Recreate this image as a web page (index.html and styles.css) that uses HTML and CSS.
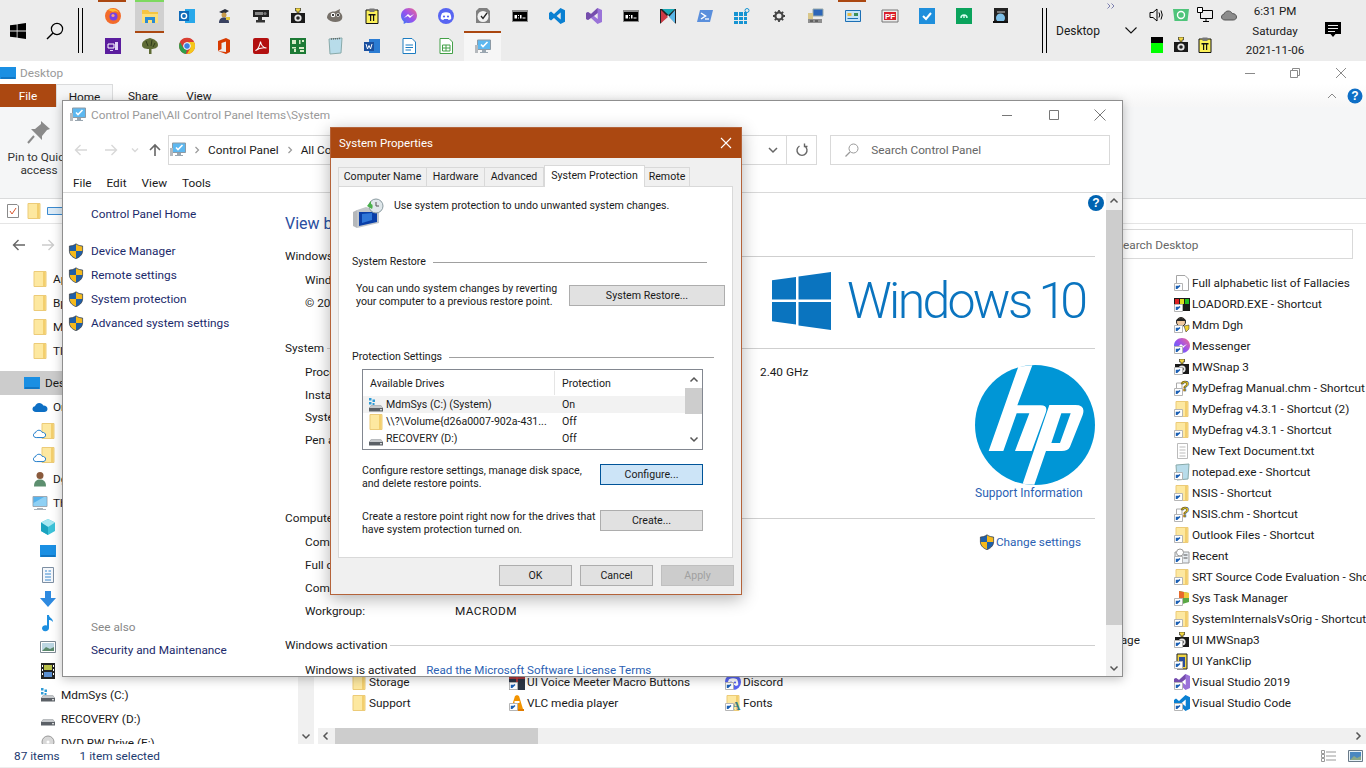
FILE: index.html
```html
<!DOCTYPE html>
<html lang="en">
<head>
<meta charset="utf-8">
<title>System Properties</title>
<link rel="stylesheet" href="styles.css">
</head>
<body>
<svg class="defs" aria-hidden="true">
  <symbol id="folder" viewBox="0 0 16 16"><path d="M2 0.5H14V15.5H2Z" fill="#fde8a0" stroke="#eccb78"/><path d="M11 1V15H13.5V1Z" fill="#f3cf6e"/></symbol>
  <symbol id="link" viewBox="0 0 16 16"><path d="M0.5 8.5H8.5V15.5H0.5Z" fill="#fff" stroke="#b5b5b5"/><path d="M2.5 14V11.5H5.2M2.8 13.6L6 10.4" fill="none" stroke="#1a5fb4" stroke-width="1.4"/></symbol>
  <symbol id="shield" viewBox="0 0 16 16"><path d="M8 .8C10 2.4 12.6 3 14.6 3V8C14.6 12 11 14.6 8 15.6 5 14.6 1.4 12 1.4 8V3C3.4 3 6 2.4 8 .8Z" fill="#1f5fa8" stroke="#3a3a3a" stroke-width=".7"/><path d="M8 1.3C10 2.8 12.3 3.3 14.2 3.4V8H8ZM8 8V15.2C5.2 14.2 1.8 11.8 1.8 8Z" fill="#f6b91a"/></symbol>
  <symbol id="cmd" viewBox="0 0 16 16"><path d="M0 2H16V14H0Z" fill="#8a8a8a"/><path d="M1 4H15V13H1Z" fill="#000"/><path d="M2.5 7H5V10.5H2.5ZM6 7H7V8H6ZM6 9.5H7V10.5H6ZM8 7H9.5V10.5H8ZM10.5 9.5H13.5V10.5H10.5Z" fill="#fff"/></symbol>
  <symbol id="drive" viewBox="0 0 16 16"><path d="M1 11L3 8.5H13L15 11V14.5H1Z" fill="#5b6066"/><path d="M3 8.5H13L15 11H1Z" fill="#c6c9cc"/><path d="M12 12.3H14V13.3H12Z" fill="#fff"/></symbol>
  <symbol id="sysdrive" viewBox="0 0 16 16"><use href="#drive"/><path d="M1 1H3.5V3.5H1ZM4.5 2.5H7V5H4.5ZM1 5H3.5V7.5H1ZM4.5 6H6.5V8H4.5Z" fill="#2f9bd6"/></symbol>
  <symbol id="camera" viewBox="0 0 16 16"><path d="M5.5 0H10.5V3H9V5H7V3H5.5Z" fill="#f0d545" stroke="#111" stroke-width=".6"/><path d="M1 5H15V15H1Z" fill="#1a1a1a"/><circle cx="8" cy="10" r="3.6" fill="#e6e6e6"/><circle cx="8" cy="10" r="1.8" fill="#222"/></symbol>
  <symbol id="clip" viewBox="0 0 16 16"><path d="M2 2H14V15.5H2Z" fill="#fcf15a" stroke="#111"/><path d="M5.5 .5H10.5V4H5.5Z" fill="#777"/><path d="M4.5 6H11.5V7.4H4.5ZM6 7.4H7.2V13H6ZM9 7.4H10.2V13H9Z" fill="#111"/></symbol>
  <symbol id="vsc" viewBox="0 0 16 16"><path d="M11.5 0L16 2.2V13.8L11.5 16 5 10 2 12.4 0 11V5L2 3.6 5 6ZM11.7 4.5L7.6 8 11.7 11.5Z" fill="#0a80d2"/></symbol>
  <symbol id="vs" viewBox="0 0 16 16"><path d="M11.5 0L16 2V14L11.5 16 5 10 2 12 0 11V5L2 4 5 6ZM11.7 5L8 8 11.7 11Z" fill="#9a73d8"/><path d="M0 5L2 4 5 6 11.5 0V5L2 12 0 11Z" fill="#68409e" opacity=".75"/></symbol>
  <symbol id="msgr" viewBox="0 0 16 16"><defs><linearGradient id="mg" x1="0" y1="1" x2="1" y2="0"><stop offset="0" stop-color="#2f7bf5"/><stop offset=".5" stop-color="#9a52ee"/><stop offset="1" stop-color="#f46a8c"/></linearGradient></defs><path d="M8 0C3.6 0 0 3.2 0 7.6 0 10 1 12 2.7 13.4V16L5.2 14.7C6 15 7 15.1 8 15.1 12.4 15.1 16 11.9 16 7.6 16 3.2 12.4 0 8 0Z" fill="url(#mg)"/><path d="M3 10L7 6 9.2 8 13 6 9 10 6.8 8Z" fill="#fff"/></symbol>
  <symbol id="discord" viewBox="0 0 16 16"><circle cx="8" cy="8" r="8" fill="#5865f2"/><path d="M4 5.2C6.5 4 9.5 4 12 5.2 13 7 13.4 9 13.2 11 12.2 11.7 11.3 12 10.5 12L10 11H6L5.5 12C4.7 12 3.8 11.7 2.8 11 2.6 9 3 7 4 5.2Z" fill="#fff"/><circle cx="6" cy="8.5" r="1.1" fill="#5865f2"/><circle cx="10" cy="8.5" r="1.1" fill="#5865f2"/></symbol>
  <symbol id="computer" viewBox="0 0 16 16"><path d="M1 1.5H15V11.5H1Z" fill="#56b2ec" stroke="#9fa9b3"/><path d="M5 13H11V14H14V15H2V14H5Z" fill="#a9b2ba"/><path d="M1.5 8L12 2H14.5V11H1.5Z" fill="#8fd0f4"/></symbol>
  <symbol id="desktop" viewBox="0 0 16 16"><path d="M0 2H16V14H0Z" fill="#1a8fe3"/><path d="M1 12.5H15V13.5H1Z" fill="#0a5da3"/></symbol>
  <symbol id="pcmon" viewBox="0 0 16 16"><path d="M2.5 1H15.5V10.5H2.5Z" fill="#5db8f0" stroke="#8d9aa5"/><path d="M6 5.5L8 7.5 12.5 3" fill="none" stroke="#fff" stroke-width="1.6"/><path d="M7 11H11V13H13V14H5V13H7Z" fill="#9aa6b0"/><path d="M0 6H3V14H0Z" fill="#b5b9bd"/></symbol>
  <symbol id="cloud" viewBox="0 0 16 16"><path d="M4 13C1.8 13 .5 11.6.5 10 .5 8.5 1.6 7.3 3 7.2 3.6 5.3 5.2 4 7.2 4 9 4 10.6 5 11.3 6.6 13.7 6.5 15.5 8 15.5 10 15.5 11.8 14 13 12.2 13Z" fill="#0d6fc4"/></symbol>
  <symbol id="cloudo" viewBox="0 0 16 16"><path d="M4 13C1.8 13 .5 11.6.5 10 .5 8.5 1.6 7.3 3 7.2 3.6 5.3 5.2 4 7.2 4 9 4 10.6 5 11.3 6.6 13.7 6.5 15.5 8 15.5 10 15.5 11.8 14 13 12.2 13Z" fill="#fff" stroke="#1a78c8" stroke-width="1.2"/></symbol>
</svg>

<header class="taskbar">
  <div class="tb-start"><svg class="i16" viewBox="0 0 16 16"><path d="M0 2.3L6.7 1.4V7.5H0ZM7.5 1.3L16 0V7.5H7.5ZM0 8.4H6.7V14.6L0 13.7ZM7.5 8.4H16V16L7.5 14.7Z" fill="#000"/></svg></div>
  <div class="tb-search"><svg class="i18" viewBox="0 0 18 18"><circle cx="11" cy="7" r="5.6" fill="none" stroke="#000" stroke-width="1.2"/><path d="M7 11L1 17" stroke="#000" stroke-width="1.4"/></svg></div>
  <div class="grip"></div>
  <div class="quick-launch">
    <div class="ql marked"><svg class="i16" viewBox="0 0 16 16"><circle cx="8" cy="8" r="8" fill="#f36b2a"/><path d="M3 2C6 0 12 0 14 5 12 3 9 3 8 4Z" fill="#ffb92e"/><circle cx="8.5" cy="8.5" r="4" fill="#7542e5"/><circle cx="8" cy="7.5" r="1.6" fill="#f7a07e"/></svg></div>
    <div class="ql active"><svg class="i16" viewBox="0 0 16 16"><path d="M0 1H6L7.5 3H16V14H0Z" fill="#f5c542"/><path d="M0 5H16V14H0Z" fill="#fcdf78"/><path d="M3 8H13V14H10V11H6V14H3Z" fill="#2a8ad4"/></svg></div>
    <div class="ql"><svg class="i16" viewBox="0 0 16 16"><path d="M6 1H16V15H6Z" fill="#28a8ea"/><path d="M0 3H10V13H0Z" fill="#0f6ab8"/><circle cx="5" cy="8" r="2.6" fill="none" stroke="#fff" stroke-width="1.4"/></svg></div>
    <div class="ql"><svg class="i16" viewBox="0 0 16 16"><path d="M3 4L9 1 13 3 8 6Z" fill="#2b2f3c"/><circle cx="8" cy="7" r="2.5" fill="#c79a4a"/><path d="M3 15C3 11 5 9.5 8 9.5S13 11 13 15Z" fill="#3a4260"/><path d="M10 9H14V12H10Z" fill="#e2c53a"/></svg></div>
    <div class="ql"><svg class="i16" viewBox="0 0 16 16"><path d="M0 2H16V9H0Z" fill="#222"/><path d="M2 4H10V7H2Z" fill="#888"/><circle cx="12" cy="5.5" r="1.6" fill="#777"/><path d="M5 9H9V12H12V14.5H3V12H5Z" fill="#333"/></svg></div>
    <div class="ql"><svg class="i16"><use href="#camera"/></svg></div>
    <div class="ql"><svg class="i16" viewBox="0 0 16 16"><path d="M0 10C0 5 4 3 8 3.5L13 1 12.5 4C15 6 16 8 15 11 13 15 3 15 0 10Z" fill="#77716a"/><circle cx="6" cy="7" r="2.2" fill="#fff"/><circle cx="11" cy="7" r="1.8" fill="#fff"/><circle cx="6" cy="7" r="1" fill="#000"/><circle cx="11" cy="7" r="1" fill="#000"/></svg></div>
    <div class="ql"><svg class="i16"><use href="#clip"/></svg></div>
    <div class="ql"><svg class="i16"><use href="#msgr"/></svg></div>
    <div class="ql"><svg class="i16"><use href="#discord"/></svg></div>
    <div class="ql"><svg class="i16" viewBox="0 0 16 16"><path d="M1 3L4 0H12L15 3V15H1Z" fill="#808080"/><circle cx="8" cy="8.5" r="5.5" fill="#f2f2f2"/><path d="M6 8L8 10.5 12 5" fill="none" stroke="#222" stroke-width="1.3"/></svg></div>
    <div class="ql"><svg class="i16"><use href="#cmd"/></svg></div>
    <div class="ql"><svg class="i16"><use href="#vsc"/></svg></div>
    <div class="ql"><svg class="i16"><use href="#vs"/></svg></div>
    <div class="ql"><svg class="i16"><use href="#cmd"/></svg></div>
    <div class="ql"><svg class="i16" viewBox="0 0 16 16"><path d="M0 1H16V16L8 7 0 16Z" fill="#222"/><path d="M1 2L8 9 1 15Z" fill="#ce3b45"/><path d="M2 1H15L8.5 7Z" fill="#1aa8b5"/><path d="M15 2V15L9 9Z" fill="#5ab7e8"/></svg></div>
    <div class="ql"><svg class="i16" viewBox="0 0 16 16"><path d="M3 2H16L13 14H0Z" fill="#5a8fdc"/><path d="M4 5L8.5 8 4 11" fill="none" stroke="#fff" stroke-width="1.5"/><path d="M8 11H12" stroke="#fff" stroke-width="1.3"/></svg></div>
    <div class="ql"><svg class="i16" viewBox="0 0 16 16"><path d="M0 4H4V8H0ZM5 4H9V8H5ZM10 4H13V8H10ZM0 9H4V12H0ZM5 9H9V12H5ZM10 9H13V12H10ZM0 13H4V16H0ZM5 13H9V16H5ZM10 13H13V16H10Z" fill="#1694d2"/><circle cx="13" cy="2.5" r="2" fill="none" stroke="#1694d2"/></svg></div>
    <div class="ql"><svg class="i12" viewBox="0 0 12 12"><circle cx="6" cy="6" r="3.6" fill="none" stroke="#444" stroke-width="2.2"/><path d="M6 0V2M6 10V12M0 6H2M10 6H12M1.8 1.8L3.2 3.2M8.8 8.8L10.2 10.2M1.8 10.2L3.2 8.8M8.8 3.2L10.2 1.8" stroke="#444" stroke-width="1.8"/></svg></div>
    <div class="ql"><svg class="i16" viewBox="0 0 16 16"><path d="M5 1H15V8H5Z" fill="#2d66b8" stroke="#9aa"/><path d="M0 5H5V11H0Z" fill="#d9c78a"/><path d="M0 11H14V15H0Z" fill="#8f8f8f"/><path d="M2 12.5H5V13.5H2ZM7 12.5H10V13.5H7Z" fill="#333"/></svg></div>
    <div class="ql marked"><svg class="i16" viewBox="0 0 16 16"><path d="M.5 2.5H15.5V13.5H.5Z" fill="#c4e3f7" stroke="#1c6fb5"/><path d="M2.5 5H6.5V8H2.5Z" fill="#e6b93e"/><path d="M9 5H13V8H9Z" fill="#3c8f58"/><path d="M2.5 10H13V11H2.5Z" fill="#1c6fb5"/></svg></div>
    <div class="ql"><svg class="i16" viewBox="0 0 16 16"><path d="M0 2H16V14H0Z" fill="#ecebeb" stroke="#777"/><path d="M2 4H14V12H2Z" fill="#d9202a"/><text class="pf-label" x="8" y="11">PF</text></svg></div>
    <div class="ql"><svg class="i16" viewBox="0 0 16 16"><path d="M0 0H16V16H0Z" fill="#1f8fdc"/><path d="M4 8L7 11 12 5" fill="none" stroke="#fff" stroke-width="2"/></svg></div>
    <div class="ql"><svg class="i16" viewBox="0 0 16 16"><path d="M0 0H16V16H0Z" fill="#0aa35c"/><path d="M5 10C5 6 11 6 11 10" fill="none" stroke="#cfe" stroke-width="1.5"/><path d="M8 7V10" stroke="#fff" stroke-width="1.3"/></svg></div>
    <div class="ql"><svg class="i16" viewBox="0 0 16 16"><path d="M1 0H15V14H1Z" fill="#222"/><circle cx="7.5" cy="10" r="4.5" fill="#7ec0e8"/><path d="M0 13H15V15H0Z" fill="#111"/><path d="M4 3H12V5H4Z" fill="#777"/></svg></div>

    <div class="ql"><svg class="i16" viewBox="0 0 16 16"><path d="M0 0H16V16H0Z" fill="#5b1d9e"/><path d="M3 6H9V10H3Z" fill="none" stroke="#fff"/><path d="M10 4H13V12H10ZM5 12H8V13H5Z" fill="#e2d3f6"/></svg></div>
    <div class="ql"><svg class="i16" viewBox="0 0 16 16"><path d="M8 0C12 1 16 3 16 7 16 10 12 11 9.5 11V16H7V11C3 11 0 10 0 7 0 3 4 1 8 0Z" fill="#5e6b35"/><path d="M4 3L6 8M10 2L9 8M13 5L11 9" stroke="#2f3a1a"/></svg></div>
    <div class="ql"><svg class="i16" viewBox="0 0 16 16"><circle cx="8" cy="8" r="8" fill="#d93f32"/><path d="M8 16A8 8 0 0 1 1.1 4L4.6 10 8 11.5 6.8 16Z" fill="#2da04a"/><path d="M1 4A8 8 0 0 1 15 4H8L4.5 10Z" fill="#d93f32"/><path d="M15 4A8 8 0 0 1 8 16L11.5 10 8 4Z" fill="#f5c71a"/><circle cx="8" cy="8" r="3.4" fill="#3d82e0" stroke="#fff"/></svg></div>
    <div class="ql"><svg class="i16" viewBox="0 0 16 16"><path d="M2 3L10 0 14 2V14L10 16 2 13 10 14V3.5L5.5 5V11L2 13Z" fill="#d83b01"/></svg></div>
    <div class="ql"><svg class="i16" viewBox="0 0 16 16"><rect width="16" height="16" rx="2" fill="#b31010"/><path d="M2.5 12.5C5 12 7 7 7.5 3.5 8 7 10 9.5 13.5 10 10 9.5 6 10 2.5 12.5Z" fill="none" stroke="#fff" stroke-width="1.1"/></svg></div>
    <div class="ql"><svg class="i16" viewBox="0 0 16 16"><path d="M0 0H16V16H0Z" fill="#1c7a35"/><path d="M2 2H6V6H2ZM9 2H10.5V6H9ZM12 2H14V4H12ZM2 9H6V10.5H2ZM4 11H6V14H4ZM9 9H14V11H9ZM10 12H14V14H10Z" fill="#d8ecc8"/></svg></div>
    <div class="ql"><svg class="i16" viewBox="0 0 16 16"><path d="M2 1L15 0 14 15 3 16Z" fill="#b8dcea" stroke="#8aa"/><path d="M4 1L14 .5" stroke="#666" stroke-dasharray="1 1" stroke-width="1.5"/></svg></div>
    <div class="ql"><svg class="i16" viewBox="0 0 16 16"><path d="M5 1H16V15H5Z" fill="#2b7cd3"/><path d="M0 4H10V13H0Z" fill="#1a4f9e"/><path d="M2 6L3.5 11 5 7.5 6.5 11 8 6" fill="none" stroke="#fff" stroke-width="1"/></svg></div>
    <div class="ql"><svg class="i16" viewBox="0 0 16 16"><path d="M2 .5H11L14.5 4V15.5H2Z" fill="#fff" stroke="#1c7cc1"/><path d="M4.5 7H12M4.5 9.5H12M4.5 12H10" stroke="#1c7cc1"/></svg></div>
    <div class="ql"><svg class="i16" viewBox="0 0 16 16"><path d="M2 .5H11L14.5 4V15.5H2Z" fill="#fff" stroke="#43a047"/><path d="M4.5 7H12V13H4.5ZM8 7V13M4.5 10H12" fill="none" stroke="#43a047"/></svg></div>
    <div class="ql running"><svg class="i16"><use href="#pcmon"/></svg></div>
  </div>
  <div class="grip grip-right"></div>
  <div class="deskband">
    <span class="band-label">Desktop</span>
    <svg class="band-more" viewBox="0 0 8 6"><path d="M.5 .5L3 3 .5 5.5M4.5 .5L7 3 4.5 5.5" fill="none" stroke="#7c7fb0"/></svg>
    <svg class="band-chev" viewBox="0 0 12 7"><path d="M.5 .5L6 6 11.5 .5" fill="none" stroke="#111" stroke-width="1.1"/></svg>
  </div>
  <div class="tray">
    <svg class="i16" viewBox="0 0 16 16"><path d="M1 5.5H4L8 2V14L4 10.5H1Z" fill="none" stroke="#000"/><path d="M10 5.5Q11.5 8 10 10.5M12 3.5Q14.5 8 12 12.5" fill="none" stroke="#000"/></svg>
    <svg class="i16" viewBox="0 0 16 16"><path d="M0 2H16L14.5 14H1.5Z" fill="#4fc47a"/><circle cx="8" cy="8" r="3.5" fill="none" stroke="#fff" stroke-width="1.4"/></svg>
    <svg class="i16" viewBox="0 0 16 16"><path d="M3.5 3.5H15.5V11.5H3.5ZM9 11.5V14.5M6 14.5H12" fill="none" stroke="#000"/><path d="M.5 .5H5.5V5.5H.5Z" fill="#fff" stroke="#000"/></svg>
    <svg class="i16" viewBox="0 0 16 16"><path d="M4 13C1.8 13 .5 11.6 .5 10 .5 8.5 1.6 7.3 3 7.2 3.6 5.3 5.2 4 7.2 4 9 4 10.6 5 11.3 6.6 13.7 6.5 15.5 8 15.5 10 15.5 11.8 14 13 12.2 13Z" fill="#8c8c8c" stroke="#555"/></svg>
    <svg class="i16" viewBox="0 0 16 16"><path d="M2 0H14V6H2Z" fill="#000"/><path d="M2 6H14V16H2Z" fill="#0f0"/></svg>
    <svg class="i16"><use href="#camera"/></svg>
    <svg class="i16"><use href="#clip"/></svg>
  </div>
  <div class="clock"><span>6:31 PM</span><span>Saturday</span><span>2021-11-06</span></div>
  <div class="notify"><svg class="i16" viewBox="0 0 16 16"><path d="M0 0H16V12H10.5L8 15 5.5 12H0Z" fill="#000"/><path d="M3 3.5H13M3 6.5H13M3 9.5H10" stroke="#ececec"/></svg></div>
</header>

<main class="explorer">
  <div class="ex-title">
    <svg class="i16"><use href="#desktop"/></svg>
    <span class="ex-title-text">Desktop</span>
    <div class="win-btns ex-btns">
      <svg class="i10" viewBox="0 0 10 10"><path d="M0 5.5H10" stroke="#8a8a8a"/></svg>
      <svg class="i10" viewBox="0 0 10 10"><path d="M.5 2.5H7.5V9.5H.5ZM2.5 2.5V.5H9.5V7.5H7.5" fill="none" stroke="#8a8a8a"/></svg>
      <svg class="i10" viewBox="0 0 10 10"><path d="M0 0L10 10M10 0L0 10" stroke="#8a8a8a"/></svg>
    </div>
  </div>
  <div class="ex-tabs">
    <span class="tab-file">File</span>
    <span class="tab-home">Home</span>
    <span class="tab-share">Share</span>
    <span class="tab-view">View</span>
    <span class="tab-fill"></span>
    <svg class="i10" viewBox="0 0 10 10"><path d="M1 7L5 3 9 7" fill="none" stroke="#888"/></svg>
    <svg class="help-small" viewBox="0 0 16 16"><circle cx="8" cy="8" r="7.5" fill="#0f6fc6"/><text class="help-q" x="8" y="12">?</text></svg>
  </div>
  <div class="ex-ribbon">
    <div class="pin">
      <svg class="i22" viewBox="0 0 22 22"><path d="M13 0L22 8 19 9 14 15 14 19 3 8 7 8 13 3Z" fill="#8a8a8a"/><path d="M6 15L0 22" stroke="#8a8a8a" stroke-width="2"/></svg>
      <span>Pin to Quick<br>access</span>
    </div>
  </div>
  <div class="ex-quick">
    <svg class="i16" viewBox="0 0 16 16"><path d="M2.5 1.5H12L13.5 3V14.5H2.5Z" fill="#fff" stroke="#8a8a8a"/><path d="M5 8L7 11 11 5" fill="none" stroke="#d8562d"/></svg>
    <svg class="i16"><use href="#folder"/></svg>
    <svg class="i16" viewBox="0 0 16 16"><path d="M.5 4.5H15.5V11.5H.5Z" fill="#dcebf7" stroke="#3a8ad0"/></svg>
  </div>
  <div class="ex-nav">
    <svg class="i14" viewBox="0 0 14 14"><path d="M13 7H2M6.5 2L1.5 7 6.5 12" fill="none" stroke="#666" stroke-width="1.4"/></svg>
    <svg class="i14" viewBox="0 0 14 14"><path d="M1 7H12M7.5 2L12.5 7 7.5 12" fill="none" stroke="#ccc" stroke-width="1.4"/></svg>
    <span class="tab-fill"></span>
    <div class="ex-search">Search Desktop</div>
  </div>
  <div class="ex-main">
    <nav class="tree">
      <div class="row l1"><svg class="i16"><use href="#folder"/></svg><span>Apps</span></div>
      <div class="row l1"><svg class="i16"><use href="#folder"/></svg><span>Bp</span></div>
      <div class="row l1"><svg class="i16"><use href="#folder"/></svg><span>Mdm</span></div>
      <div class="row l1"><svg class="i16"><use href="#folder"/></svg><span>Tl</span></div>
      <div class="row l0 selected"><svg class="i16"><use href="#desktop"/></svg><span>Desktop</span></div>
      <div class="row l2"><svg class="i16"><use href="#cloud"/></svg><span>OneDrive</span></div>
      <div class="row l2 cloudfolder"><svg class="i16 cf-cloud"><use href="#cloudo"/></svg><svg class="i16 cf-folder"><use href="#folder"/></svg></div>
      <div class="row l2 cloudfolder"><svg class="i16 cf-cloud"><use href="#cloudo"/></svg><svg class="i16 cf-folder"><use href="#folder"/></svg></div>
      <div class="row l2"><svg class="i16" viewBox="0 0 16 16"><circle cx="8" cy="4.5" r="3.5" fill="#8a5a3c"/><path d="M2 15.5C2 10 5 8.5 8 8.5S14 10 14 15.5Z" fill="#5d8f6f"/></svg><span>Dgh</span></div>
      <div class="row l2"><svg class="i16"><use href="#computer"/></svg><span>This PC</span></div>
      <div class="row l3"><svg class="i16" viewBox="0 0 16 16"><path d="M8 0L15 3.5V12L8 16 1 12V3.5Z" fill="#3cc2d8"/><path d="M8 8L15 3.5 8 0 1 3.5Z" fill="#a8e8f2"/><path d="M8 8V16L1 12V3.5Z" fill="#1aa3bf"/></svg></div>
      <div class="row l3"><svg class="i16"><use href="#desktop"/></svg></div>
      <div class="row l3"><svg class="i16" viewBox="0 0 16 16"><path d="M2.5 .5H13.5V15.5H2.5Z" fill="#f4f7fb" stroke="#7d8fa3"/><path d="M5 4H7M5 7H11M5 10H11M5 13H11M8.5 4H11" stroke="#3a8ad0"/></svg></div>
      <div class="row l3"><svg class="i16" viewBox="0 0 16 16"><path d="M5 0H11V7H16L8 16 0 7H5Z" fill="#2e8ae0"/></svg></div>
      <div class="row l3"><svg class="i16" viewBox="0 0 16 16"><path d="M7 0H9C9 3 13 3 13 7 11 5 10 5 9 5V13A3.5 3 0 1 1 7 10.5Z" fill="#1e8fe0"/></svg></div>
      <div class="row l3"><svg class="i16" viewBox="0 0 16 16"><path d="M.5 2.5H15.5V13.5H.5Z" fill="#fff" stroke="#7d8a94"/><path d="M2 4H14V12H2Z" fill="#bcd6e2"/><path d="M2 12L6 8 10 10 14 8V12Z" fill="#5b8a6c"/></svg></div>
      <div class="row l3"><svg class="i16" viewBox="0 0 16 16"><path d="M1 0H15V16H1Z" fill="#222"/><path d="M4 2H12V7H4Z" fill="#b8c04a"/><path d="M4 9H12V14H4Z" fill="#5a8ed0"/><path d="M2 2H3V4H2ZM2 6H3V8H2ZM2 10H3V12H2ZM13 2H14V4H13ZM13 6H14V8H13ZM13 10H14V12H13Z" fill="#fff"/></svg></div>
      <div class="row l3"><svg class="i16"><use href="#sysdrive"/></svg><span>MdmSys (C:)</span></div>
      <div class="row l3"><svg class="i16"><use href="#drive"/></svg><span>RECOVERY (D:)</span></div>
      <div class="row l3"><svg class="i16" viewBox="0 0 16 16"><circle cx="8" cy="7" r="6" fill="#d8d8d8" stroke="#999"/><circle cx="8" cy="7" r="1.5" fill="#fff"/></svg><span>DVD RW Drive (E:)</span></div>
    </nav>
    <div class="tree-scroll">
      <span class="scroll-fill"></span>
      <svg class="chev" viewBox="0 0 10 10"><path d="M1.5 3.5L5 7 8.5 3.5" fill="none" stroke="#555" stroke-width="1.5"/></svg>
    </div>
    <section class="files">
      <div class="file-grid">
        <div class="col">
          <div class="file"><svg class="i16"><use href="#folder"/></svg><span>Storage</span></div>
          <div class="file"><svg class="i16"><use href="#folder"/></svg><span>Support</span></div>
        </div>
        <div class="col">
          <div class="file"><svg class="i16" viewBox="0 0 16 16"><path d="M0 0H16V16H0Z" fill="#2a3545"/><path d="M0 4H16M8 0V8" stroke="#d23b3b" stroke-width="1.5"/><use href="#link"/></svg><span>UI Voice Meeter Macro Buttons</span></div>
          <div class="file"><svg class="i16" viewBox="0 0 16 16"><path d="M8 0L10 1 14 14H2L6 1Z" fill="#f29400"/><path d="M5.5 6H10.5V8H5.5Z" fill="#fff"/><path d="M1 14H15V16H1Z" fill="#e07b00"/><use href="#link"/></svg><span>VLC media player</span></div>
        </div>
        <div class="col">
          <div class="file far"><span>Manage</span></div>
          <div class="file far hidden-row"><span>Programs</span></div>
          <div class="file"><svg class="i16"><use href="#discord"/><use href="#link"/></svg><span>Discord</span></div>
          <div class="file"><svg class="i16" viewBox="0 0 16 16"><use href="#folder"/><text class="font-a" x="11" y="15">A</text><use href="#link"/></svg><span>Fonts</span></div>
        </div>
        <div class="col">
          <div class="file"><svg class="i16" viewBox="0 0 16 16"><path d="M2.5 .5H11L14.5 4V15.5H2.5Z" fill="#fff" stroke="#a5a5a5"/><use href="#link"/></svg><span>Full alphabetic list of Fallacies</span></div>
          <div class="file"><svg class="i16" viewBox="0 0 16 16"><path d="M0 2H16V15H0Z" fill="#1a1a1a"/><path d="M1 3H5V8H1Z" fill="#d22"/><path d="M11 3H15V8H11Z" fill="#2b2"/><path d="M6 3H10V8H6Z" fill="#dd2"/><use href="#link"/></svg><span>LOADORD.EXE - Shortcut</span></div>
          <div class="file"><svg class="i16" viewBox="0 0 16 16"><circle cx="7" cy="5" r="4.5" fill="#f1c9a0" stroke="#222"/><path d="M2 4C3 0 11 0 12 4Z" fill="#222"/><path d="M10 9L15 8V12L12 15Z" fill="#f0d030" stroke="#222" stroke-width=".5"/><use href="#link"/></svg><span>Mdm Dgh</span></div>
          <div class="file"><svg class="i16"><use href="#msgr"/><use href="#link"/></svg><span>Messenger</span></div>
          <div class="file"><svg class="i16"><use href="#camera"/><use href="#link"/></svg><span>MWSnap 3</span></div>
          <div class="file"><svg class="i16" viewBox="0 0 16 16"><path d="M2.5 3H8V15H2.5Z" fill="#fff" stroke="#aaa"/><text class="help-y" x="11" y="11">?</text><use href="#link"/></svg><span>MyDefrag Manual.chm - Shortcut</span></div>
          <div class="file"><svg class="i16"><use href="#folder"/><use href="#link"/></svg><span>MyDefrag v4.3.1 - Shortcut (2)</span></div>
          <div class="file"><svg class="i16"><use href="#folder"/><use href="#link"/></svg><span>MyDefrag v4.3.1 - Shortcut</span></div>
          <div class="file"><svg class="i16" viewBox="0 0 16 16"><path d="M3.5 .5H13.5V15.5H3.5Z" fill="#fff" stroke="#bbb"/><path d="M5.5 4H11.5M5.5 7H11.5M5.5 10H11.5M5.5 13H11.5" stroke="#bbb"/></svg><span>New Text Document.txt</span></div>
          <div class="file"><svg class="i16" viewBox="0 0 16 16"><path d="M2 1L15 0 14 15 3 16Z" fill="#b8dcea" stroke="#8aa"/><use href="#link"/></svg><span>notepad.exe - Shortcut</span></div>
          <div class="file"><svg class="i16"><use href="#folder"/><use href="#link"/></svg><span>NSIS - Shortcut</span></div>
          <div class="file"><svg class="i16" viewBox="0 0 16 16"><path d="M2.5 3H8V15H2.5Z" fill="#fff" stroke="#aaa"/><text class="help-y" x="11" y="11">?</text><use href="#link"/></svg><span>NSIS.chm - Shortcut</span></div>
          <div class="file"><svg class="i16"><use href="#folder"/><use href="#link"/></svg><span>Outlook Files - Shortcut</span></div>
          <div class="file"><svg class="i16" viewBox="0 0 16 16"><path d="M1 4H15V15H1Z" fill="#e9eef3" stroke="#999"/><circle cx="6" cy="4.5" r="3.5" fill="#fff" stroke="#999"/><path d="M9.5 7H13.5M9.5 10H13.5" stroke="#555"/><use href="#link"/></svg><span>Recent</span></div>
          <div class="file"><svg class="i16"><use href="#folder"/><use href="#link"/></svg><span>SRT Source Code Evaluation - Shortcut</span></div>
          <div class="file"><svg class="i16" viewBox="0 0 16 16"><path d="M5 1L15 3V12L5 15Z" fill="#5aa845"/><path d="M5 1L10 2V8H5Z" fill="#e86a2b"/><path d="M10 2L15 3V8H10Z" fill="#f0c93a"/><use href="#link"/></svg><span>Sys Task Manager</span></div>
          <div class="file"><svg class="i16"><use href="#folder"/><use href="#link"/></svg><span>SystemInternalsVsOrig - Shortcut</span></div>
          <div class="file"><svg class="i16"><use href="#camera"/><use href="#link"/></svg><span>UI MWSnap3</span></div>
          <div class="file"><svg class="i16" viewBox="0 0 16 16"><path d="M3 1H13V16H3Z" fill="#f0d545" stroke="#222"/><path d="M5 4H11V14H5Z" fill="#2a4d9c"/><use href="#link"/></svg><span>UI YankClip</span></div>
          <div class="file"><svg class="i16"><use href="#vs"/><use href="#link"/></svg><span>Visual Studio 2019</span></div>
          <div class="file"><svg class="i16"><use href="#vsc"/><use href="#link"/></svg><span>Visual Studio Code</span></div>
        </div>
      </div>
      <div class="hscroll">
        <svg class="chev" viewBox="0 0 10 10"><path d="M6.5 1.5L3 5 6.5 8.5" fill="none" stroke="#555" stroke-width="1.5"/></svg>
        <span class="hthumb"></span>
        <span class="scroll-fill"></span>
        <svg class="chev" viewBox="0 0 10 10"><path d="M3.5 1.5L7 5 3.5 8.5" fill="none" stroke="#555" stroke-width="1.5"/></svg>
      </div>
    </section>
  </div>
  <footer class="ex-status">
    <span class="st-count">87 items</span>
    <span class="st-sel">1 item selected</span>
    <span class="tab-fill"></span>
    <svg class="i16 st-view" viewBox="0 0 16 16"><path d="M.5 2.5H3.5V5.5H.5ZM.5 6.5H3.5V9.5H.5ZM.5 10.5H3.5V13.5H.5Z" fill="#fff" stroke="#9a9a9a"/><path d="M5 4H15M5 8H15M5 12H15" stroke="#9a9a9a"/></svg>
    <svg class="i16" viewBox="0 0 16 16"><path d="M.5 2.5H14.5V13.5H.5Z" fill="#e8f2f8" stroke="#6a7a88"/><path d="M2 4H13V12H2Z" fill="#4a88c0"/><path d="M2 12L6 8 9 10 13 8V12Z" fill="#8aa888"/></svg>
  </footer>
</main>

<section class="cp">
  <div class="cp-title">
    <svg class="i16"><use href="#pcmon"/></svg>
    <span class="cp-title-text">Control Panel\All Control Panel Items\System</span>
    <div class="win-btns cp-btns">
      <svg class="i10" viewBox="0 0 10 10"><path d="M0 5.5H10" stroke="#777"/></svg>
      <svg class="i10" viewBox="0 0 10 10"><path d="M.5 .5H9.5V9.5H.5Z" fill="none" stroke="#777"/></svg>
      <svg class="i12" viewBox="0 0 12 12"><path d="M.5 .5L11.5 11.5M11.5 .5L.5 11.5" stroke="#777"/></svg>
    </div>
  </div>
  <div class="cp-nav">
    <svg class="i14" viewBox="0 0 14 14"><path d="M13 7H2M6.5 2L1.5 7 6.5 12" fill="none" stroke="#d8d8d8" stroke-width="1.4"/></svg>
    <svg class="i14" viewBox="0 0 14 14"><path d="M1 7H12M7.5 2L12.5 7 7.5 12" fill="none" stroke="#d8d8d8" stroke-width="1.4"/></svg>
    <svg class="i8" viewBox="0 0 8 8"><path d="M1 2.5L4 5.5 7 2.5" fill="none" stroke="#d8d8d8" stroke-width="1.4"/></svg>
    <svg class="i14 nav-up" viewBox="0 0 14 14"><path d="M7 13V2M2 7L7 2 12 7" fill="none" stroke="#666" stroke-width="1.6"/></svg>
    <div class="addr">
      <svg class="i16"><use href="#pcmon"/></svg>
      <svg class="i8 crumb" viewBox="0 0 8 8"><path d="M2.5 1L5.5 4 2.5 7" fill="none" stroke="#999" stroke-width="1.2"/></svg>
      <span>Control Panel</span>
      <svg class="i8 crumb" viewBox="0 0 8 8"><path d="M2.5 1L5.5 4 2.5 7" fill="none" stroke="#999" stroke-width="1.2"/></svg>
      <span>All Control Panel Items</span>
      <span class="tab-fill"></span>
      <svg class="i10" viewBox="0 0 10 10"><path d="M1 3L5 7 9 3" fill="none" stroke="#666" stroke-width="1.5"/></svg>
      <span class="addr-refresh"><svg class="i14" viewBox="0 0 14 14"><path d="M9.5 3A5 5 0 1 1 4.5 3M4.5 .5V3.5H1.5" fill="none" stroke="#666" stroke-width="1.4" transform="matrix(-1 0 0 1 14 0)"/></svg></span>
    </div>
    <div class="cp-search">
      <svg class="i14" viewBox="0 0 14 14"><circle cx="8.5" cy="5.5" r="4.5" fill="none" stroke="#999"/><path d="M5 9L.5 13.5" stroke="#999" stroke-width="1.2"/></svg>
      <span>Search Control Panel</span>
    </div>
  </div>
  <div class="cp-menu"><span>File</span><span>Edit</span><span>View</span><span>Tools</span></div>
  <div class="cp-body">
    <aside class="cp-left">
      <a class="home">Control Panel Home</a>
      <a class="task"><svg class="i16"><use href="#shield"/></svg>Device Manager</a>
      <a class="task"><svg class="i16"><use href="#shield"/></svg>Remote settings</a>
      <a class="task"><svg class="i16"><use href="#shield"/></svg>System protection</a>
      <a class="task"><svg class="i16"><use href="#shield"/></svg>Advanced system settings</a>
      <span class="tab-fill"></span>
      <span class="see-also">See also</span>
      <a class="home sec-link">Security and Maintenance</a>
    </aside>
    <div class="cp-right">
      <svg class="help-big" viewBox="0 0 16 16"><circle cx="8" cy="8" r="8" fill="#0063b1"/><text class="help-q" x="8" y="12">?</text></svg>
      <h1 class="cp-h">View basic information about your computer</h1>
      <div class="sec-head"><span>Windows edition</span><i></i></div>
      <div class="sec s1">
        <div class="sec-rows">
          <div class="kv">Windows 10 Pro</div>
          <div class="kv">© 2019 Microsoft Corporation. All rights reserved.</div>
        </div>
        <div class="winlogo">
          <svg class="winflag" viewBox="0 0 59 58"><path d="M0 8.2L24 5V27.5H0ZM26.5 4.6L59 0V27.5H26.5ZM0 30H24V52.5L0 49.3ZM26.5 30H59V58L26.5 53.4Z" fill="#0a74bf"/></svg>
          <span class="winword">Windows<b>10</b></span>
        </div>
      </div>
      <div class="sec-head"><span>System</span><i></i></div>
      <div class="sec s2">
        <div class="sec-rows">
          <div class="kv v3"><span>Processor:</span><span>Intel(R) Core(TM) CPU</span><span>2.40 GHz</span></div>
          <div class="kv">Installed memory (RAM):</div>
          <div class="kv">System type:</div>
          <div class="kv">Pen and Touch:</div>
        </div>
        <div class="hplogo">
          <svg class="hp" viewBox="525 45 360 360"><circle cx="705" cy="225" r="180" fill="#0096d6"/><path fill="#fff" fill-rule="evenodd" d="M655 50L697 46 652 166H722Q745 166 737 188L695 303H645L688 190H650L610 303H566ZM748 165H826Q858 165 848 195L810 290Q804 303 785 303H738L703 404 668 401ZM784 190L754 279H780L812 190Z"/></svg>
          <a class="blue">Support Information</a>
        </div>
      </div>
      <div class="sec-head"><span>Computer name, domain, and workgroup settings</span><i></i></div>
      <div class="sec s3">
        <div class="sec-rows">
          <div class="kv">Computer name:</div>
          <div class="kv">Full computer name:</div>
          <div class="kv">Computer description:</div>
          <div class="kv v2"><span>Workgroup:</span><span class="wg">MACRODM</span></div>
        </div>
        <a class="blue change"><svg class="i16"><use href="#shield"/></svg>Change settings</a>
      </div>
      <div class="sec-head"><span>Windows activation</span><i></i></div>
      <div class="kv activ"><span>Windows is activated</span><a class="blue">Read the Microsoft Software License Terms</a></div>
    </div>
    <div class="cp-scroll">
      <svg class="chev" viewBox="0 0 10 10"><path d="M1.5 6.5L5 3 8.5 6.5" fill="none" stroke="#555" stroke-width="1.5"/></svg>
      <span class="vthumb"></span>
      <span class="tab-fill"></span>
      <svg class="chev" viewBox="0 0 10 10"><path d="M1.5 3.5L5 7 8.5 3.5" fill="none" stroke="#555" stroke-width="1.5"/></svg>
    </div>
  </div>
</section>

<section class="dlg">
  <div class="dlg-title"><span>System Properties</span><svg class="i12" viewBox="0 0 12 12"><path d="M1 1L11 11M11 1L1 11" stroke="#fff" stroke-width="1.1"/></svg></div>
  <div class="dlg-body">
    <div class="tabs">
      <span class="tb t1">Computer Name</span>
      <span class="tb t2">Hardware</span>
      <span class="tb t3">Advanced</span>
      <span class="tb t4 on">System Protection</span>
      <span class="tb t5">Remote</span>
    </div>
    <div class="panel">
      <div class="intro">
        <svg class="i32" viewBox="0 0 32 32"><path d="M1 14L5 12V30L1 28Z" fill="#b5b8bb"/><path d="M5 12L14 9 27 13V25L5 30Z" fill="#c2c6ca"/><path d="M7 14L25 14V24L7 28Z" fill="#0a3fa8"/><path d="M10 16L20 15V22L10 25Z" fill="#2f77d8"/><circle cx="24" cy="8" r="7" fill="#dfe7ea" stroke="#8a9aa0"/><path d="M24 4V8H27" fill="none" stroke="#555"/><path d="M15 8L19 3V6C21 6 21 9 20 11Z" fill="#49b04a"/></svg>
        <span>Use system protection to undo unwanted system changes.</span>
      </div>
      <div class="legend l-a"><span>System Restore</span><i></i></div>
      <div class="act act-a">
        <span class="act-text">You can undo system changes by reverting<br>your computer to a previous restore point.</span>
        <span class="btn btn-wide">System Restore...</span>
      </div>
      <div class="legend l-b"><span>Protection Settings</span><i></i></div>
      <div class="lb">
        <div class="lb-main">
          <div class="lb-head"><span>Available Drives</span><span>Protection</span></div>
          <div class="lb-row hot"><span class="dn"><svg class="i16"><use href="#sysdrive"/></svg>MdmSys (C:) (System)</span><span>On</span></div>
          <div class="lb-row"><span class="dn"><svg class="i16"><use href="#folder"/></svg>\\?\Volume{d26a0007-902a-431...</span><span>Off</span></div>
          <div class="lb-row"><span class="dn"><svg class="i16"><use href="#drive"/></svg>RECOVERY (D:)</span><span>Off</span></div>
        </div>
        <div class="lb-scroll">
          <svg class="chev" viewBox="0 0 10 10"><path d="M1.5 6.5L5 3 8.5 6.5" fill="none" stroke="#555" stroke-width="1.5"/></svg>
          <span class="lb-thumb"></span>
          <span class="tab-fill"></span>
          <svg class="chev" viewBox="0 0 10 10"><path d="M1.5 3.5L5 7 8.5 3.5" fill="none" stroke="#555" stroke-width="1.5"/></svg>
        </div>
      </div>
      <div class="act act-b">
        <span class="act-text">Configure restore settings, manage disk space,<br>and delete restore points.</span>
        <span class="btn btn-mid focus">Configure...</span>
      </div>
      <div class="act act-c">
        <span class="act-text">Create a restore point right now for the drives that<br>have system protection turned on.</span>
        <span class="btn btn-mid">Create...</span>
      </div>
    </div>
    <div class="dlg-btns">
      <span class="btn btn-foot">OK</span>
      <span class="btn btn-foot">Cancel</span>
      <span class="btn btn-foot off">Apply</span>
    </div>
  </div>
</section>
</body>
</html>
```

FILE: styles.css
```css
* { box-sizing: border-box; }
html, body { margin: 0; height: 768px; overflow: hidden; }
body {
  position: relative;
  background: #fff;
  color: #1a1a1a;
  font: 11.8px/16px Roboto, "Noto Sans", sans-serif;
}
a { color: inherit; text-decoration: none; }
svg { display: block; flex: none; overflow: visible; }
.defs { position: absolute; width: 0; height: 0; }
.i8 { width: 8px; height: 8px; }
.i10 { width: 10px; height: 10px; }
.i12 { width: 12px; height: 12px; }
.i14 { width: 14px; height: 14px; }
.i16 { width: 16px; height: 16px; }
.i18 { width: 18px; height: 18px; }
.i22 { width: 22px; height: 22px; }
.i32 { width: 32px; height: 32px; }
.tab-fill { flex: 1; }
.pf-label { font: 700 8px "Liberation Sans", sans-serif; fill: #fff; text-anchor: middle; }
.help-q { font: 700 12px "Liberation Sans", sans-serif; fill: #fff; text-anchor: middle; }
.help-y { font: 700 14px "Liberation Sans", sans-serif; fill: #f0d020; stroke: #222; stroke-width: .5px; text-anchor: middle; }
.font-a { font: 700 12px "Liberation Serif", serif; fill: #2d7a8a; text-anchor: middle; }

/* Taskbar */
.taskbar { display: flex; height: 61px; background: #ececec; align-items: stretch; }
.tb-start { width: 36px; display: flex; align-items: center; justify-content: center; }
.tb-search { width: 37px; display: flex; align-items: center; justify-content: center; }
.grip { width: 5px; margin: 8px 0 8px 5px; border-left: 1px solid #000; border-right: 1px solid #000; }
.quick-launch { margin-left: 11px; display: grid; grid-template-columns: repeat(25, 37px); grid-template-rows: 31px 30px; width: 925px; }
.ql { position: relative; display: flex; align-items: center; justify-content: center; }
.ql.marked::before { content: ""; position: absolute; top: 0; left: 4px; width: 28px; height: 2px; background: #ab4811; }
.ql.active { background: #d0d0d0; border-top: 2px solid #7dd95f; border-bottom: 2px solid #ab4811; margin: 0 4px -2px; }
.ql.running { background: #f6f6f6; border-top: 2px solid #ab4811; }
.grip-right { margin-left: 23px; }
.deskband { width: 98px; display: grid; grid-template-columns: 51px 15px 32px; padding-left: 9px; align-items: center; font-size: 12px; }
.band-more { align-self: start; width: 8px; height: 6px; margin-top: 3px; }
.band-chev { width: 12px; height: 7px; margin-left: 3px; }
.tray { width: 96px; margin-right: 3px; padding-top: 7px; display: grid; grid-template-columns: repeat(4, 24px); grid-template-rows: 30px 16px; justify-items: center; }
.clock { width: 72px; margin-left: -5px; display: flex; flex-direction: column; align-items: center; justify-content: center; gap: 3.5px; font-size: 11.6px; }
.notify { flex: 1; display: flex; align-items: center; padding-left: 14px; padding-bottom: 1px; }

/* Explorer */
.explorer { height: 707px; display: flex; flex-direction: column; overflow: hidden; }
.ex-title { height: 23px; display: flex; align-items: center; gap: 4px; }
.ex-title-text { color: #999; }
.win-btns { display: flex; align-items: center; margin-left: auto; }
.ex-btns { gap: 35px; padding-right: 20px; }
.ex-btns svg:last-child { margin-left: 1px; }
.ex-tabs { height: 23px; display: flex; align-items: stretch; padding-right: 3px; line-height: 25px; background: linear-gradient(#fff, #f6f6f6); }
.ex-tabs > svg { align-self: center; }
.ex-tabs .help-small { margin-left: 10px; width: 16px; height: 16px; }
.tab-file { width: 56px; background: #ab4811; color: #fff; text-align: center; }
.tab-home { width: 57px; border: 1px solid #dadbdc; border-bottom: 0; background: #f5f6f7; text-align: center; }
.tab-share { width: 60px; text-align: center; }
.tab-view { width: 52px; text-align: center; }
.ex-ribbon { height: 92px; background: #f5f6f7; border-bottom: 1px solid #dadbdc; }
.pin { width: 78px; display: flex; flex-direction: column; align-items: center; text-align: center; padding-top: 14px; line-height: 13px; gap: 8px; color: #333; }
.ex-quick { height: 25px; display: flex; align-items: center; gap: 5px; padding-left: 5px; border-bottom: 1px solid #e5e5e5; }
.ex-nav { height: 38px; display: flex; align-items: flex-start; padding: 5px 13px 0 12px; gap: 15px; }
.ex-nav > svg { margin-top: 9px; }
.ex-search { width: 246px; height: 30px; line-height: 30px; border: 1px solid #d9d9d9; color: #666; padding-left: 8px; }
.ex-main { flex: 1; display: flex; min-height: 0; }
.tree { width: 298px; padding-top: 5px; overflow: hidden; }
.row { height: 24px; display: flex; align-items: center; gap: 6px; white-space: nowrap; }
.l0 { padding-left: 24px; gap: 5px; }
.l1 { padding-left: 32px; gap: 5px; }
.l2 { padding-left: 32px; gap: 5px; }
.l3 { padding-left: 40px; gap: 5px; }
.selected { background: #cccccc; margin-top: 8px; }
.cloudfolder { position: relative; padding-left: 40px; }
.cf-cloud { position: absolute; left: 33px; top: 8px; width: 13px; height: 13px; z-index: 1; }
.tree-scroll { width: 16px; background: #f0f0f0; display: flex; flex-direction: column; }
.scroll-fill { flex: 1; }
.chev { width: 10px; height: 10px; margin: 3px; flex: none; }
.files { flex: 1; min-width: 0; display: flex; flex-direction: column; }
.file-grid { flex: 1; display: grid; grid-template-columns: 158px 216px 449px 1fr; padding: 0 0 0 37px; overflow: hidden; }
.col { display: flex; flex-direction: column; justify-content: flex-end; padding-bottom: 15px; }
.file { height: 21px; display: flex; align-items: center; gap: 2px; white-space: nowrap; }
.far { justify-content: flex-end; padding-right: 34px; }
.hidden-row { padding-right: 70px; }
.hscroll { height: 16px; margin-left: 4px; background: #f0f0f0; display: flex; align-items: center; }
.hthumb { width: 203px; height: 16px; background: #cdcdcd; margin-left: 1px; }
.ex-status { height: 24px; display: flex; align-items: center; padding: 0 2px 0 14px; border-bottom: 1px solid #eee; color: #1c3a70; }
.st-sel { margin-left: 20px; }
.st-view { margin-right: 11px; }

/* Control Panel window */
.cp { position: absolute; left: 62px; top: 100px; width: 1061px; height: 577px; background: #fff; border: 1px solid #8f8f8f; box-shadow: 0 2px 10px rgba(0,0,0,.25); display: flex; flex-direction: column; }
.cp-title { height: 27px; display: flex; align-items: center; gap: 5px; padding-left: 7px; }
.cp-title-text { color: #999; }
.cp-btns { gap: 37px; padding-right: 16px; }
.cp-btns svg:last-child { margin-left: -2px; }
.cp-nav { height: 37px; display: flex; align-items: flex-start; padding: 7px 12px 0 11px; }
.cp-nav > svg { margin-top: 8px; }
.cp-nav > .i14 + .i14 { margin-left: 16px; }
.cp-nav > .i8 { margin: 11px 0 0 13px; }
.cp-nav > .nav-up { margin-left: 9px; }
.addr { margin-left: 6px; width: 650px; height: 30px; border: 1px solid #d9d9d9; display: flex; align-items: center; gap: 8px; padding-left: 1px; white-space: nowrap; overflow: hidden; }
.addr .crumb { margin: 0 -1px; }
.addr-refresh { width: 30px; height: 28px; border-left: 1px solid #d9d9d9; display: flex; align-items: center; justify-content: center; }
.cp-search { margin-left: 13px; width: 280px; height: 30px; border: 1px solid #d9d9d9; display: flex; align-items: center; gap: 12px; padding-left: 14px; color: #666; }
.cp-menu { height: 28px; display: flex; align-items: center; gap: 15px; padding: 8px 0 0 10px; border-bottom: 1px solid #d9d9d9; }
.cp-body { flex: 1; min-height: 0; display: flex; }
.cp-left { width: 222px; display: flex; flex-direction: column; color: #1b2a6b; padding: 13px 0 18px; }
.home { padding-left: 28px; }
.task { display: flex; align-items: center; height: 24px; gap: 7px; padding-left: 5px; }
.home + .task { margin-top: 17px; }
.see-also { padding-left: 28px; color: #888; margin-bottom: 7px; }
.cp-right { position: relative; flex: 1; min-width: 0; overflow: hidden; padding-right: 11px; }
.help-big { position: absolute; right: 2px; top: 2px; width: 16px; height: 16px; }
.cp-h { margin: 21px 0 14px; font-size: 16px; font-weight: 400; line-height: 20px; color: #2a4ea0; white-space: nowrap; }
.sec-head { display: flex; align-items: center; gap: 3px; height: 16px; color: #222; }
.sec-head i { flex: 1; height: 1px; background: #cfcfcf; }
.sec { display: flex; justify-content: space-between; }
.sec-rows { padding-left: 20px; padding-top: 5px; flex: 1; }
.kv { height: 23px; line-height: 23px; white-space: nowrap; }
.v2, .v3 { display: grid; grid-template-columns: 150px 305px auto; }
.wg { letter-spacing: .4px; }
.s1 { height: 76px; }
.s2 { height: 154px; }
.s2 .kv { height: 22.5px; line-height: 22.5px; }
.s3 { height: 111px; }
.winlogo { display: flex; align-items: center; gap: 16px; margin-top: 8px; height: 58px; margin-right: 13px; }
.winflag { width: 59px; height: 58px; }
.winword { font: 300 50px/58px Roboto, sans-serif; color: #0a74bf; letter-spacing: -2.7px; white-space: nowrap; }
.winword b { font-weight: 300; margin-left: 8px; letter-spacing: -6px; }
.hplogo { display: flex; flex-direction: column; margin-top: 9px; }
.hp { width: 120px; height: 120px; }
.blue { color: #2b5fb3; }
.hplogo .blue { font-size: 12px; }
.change { display: flex; align-items: center; gap: 1px; margin: 8px 14px 0 0; height: 16px; }
.activ { padding-left: 20px; margin-top: 6px; display: flex; gap: 10px; }
.activ .blue { font-size: 11.6px; }
.cp-scroll { width: 16px; background: #f0f0f0; display: flex; flex-direction: column; }
.vthumb { height: 415px; background: #cdcdcd; margin-top: 1px; }

/* Dialog */
.dlg { position: absolute; left: 330px; top: 127px; width: 412px; height: 468px; border: 1px solid #b4633a; box-shadow: 0 4px 16px rgba(0,0,0,.3); background: #f0f0f0; display: flex; flex-direction: column; font-size: 10.6px; }
.dlg-title { height: 30px; padding: 0 9px 1px 8px; background: #ab4811; color: #fff; display: flex; align-items: center; justify-content: space-between; flex: none; font-size: 11.5px; }
.dlg-body { flex: 1; display: flex; flex-direction: column; }
.tabs { display: flex; align-items: flex-end; padding-left: 7px; height: 28px; position: relative; z-index: 1; }
.tb { height: 19px; line-height: 18px; text-align: center; background: #f0f0f0; border: 1px solid #d9d9d9; border-bottom: 0; border-left: 0; white-space: nowrap; }
.t1 { width: 89px; border-left: 1px solid #d9d9d9; }
.t2 { width: 58px; }
.t3 { width: 59px; }
.t4 { width: 101px; }
.t5 { width: 45px; }
.tb.on { height: 22px; line-height: 19px; background: #fff; margin-bottom: -1px; border-left: 1px solid #d9d9d9; }
.panel { margin: 0 8px 0 7px; height: 372px; background: #fff; border: 1px solid #d9d9d9; padding-left: 13px; }
.intro { display: flex; gap: 10px; padding-top: 11px; height: 44px; }
.legend { display: flex; align-items: center; gap: 7px; height: 16px; }
.legend i { flex: 1; height: 1px; background: #a0a0a0; }
.l-a { width: 355px; margin-top: 23px; }
.l-b { width: 362px; margin-top: 41px; }
.act { display: flex; justify-content: space-between; align-items: center; line-height: 13px; white-space: nowrap; }
.act-a { width: 373px; padding-left: 4px; margin-top: 13px; height: 25px; }
.act-a .act-text { padding-bottom: 2px; }
.act-b, .act-c { width: 341px; height: 21px; }
.act-b .act-text, .act-c .act-text { padding-top: 4px; }
.act-b { margin: 14px 0 0 10px; }
.act-c { margin: 25px 0 0 10px; }
.btn { display: inline-flex; flex: none; align-items: center; justify-content: center; height: 21px; background: #e1e1e1; border: 1px solid #adadad; color: #1a1a1a; }
.btn-wide { width: 156px; }
.btn-mid { width: 103px; }
.focus { background: #cce4f7; border-color: #005499; }
.lb { margin: 4px 0 0 10px; width: 341px; height: 81px; border: 1px solid #828790; display: flex; }
.lb-main { flex: 1; }
.lb-head { height: 26px; display: grid; grid-template-columns: 192px 1fr; align-items: center; }
.lb-head span { padding: 2px 0 0 7px; border-right: 1px solid #e5e5e5; line-height: 22px; }
.lb-head span:last-child { border: 0; }
.lb-row { height: 17px; display: grid; grid-template-columns: 192px 1fr; align-items: center; }
.lb-row span:last-child { padding-left: 7px; }
.hot { background: #f2f2f2; }
.dn { display: flex; align-items: center; gap: 2px; padding-left: 5px; white-space: nowrap; }
.lb-scroll { width: 17px; display: flex; flex-direction: column; background: #fff; align-items: center; }
.lb-scroll .chev { margin: 5px 3px 1px; }
.lb-scroll .chev:last-child { margin: 3px 3px 5px; }
.lb-thumb { width: 100%; height: 26px; background: #cdcdcd; margin-top: 2px; }
.dlg-btns { display: flex; justify-content: flex-end; gap: 8px; padding: 7px 7px 0 0; }
.btn-foot { width: 73px; }
.off { background: #cccccc; border-color: #bfbfbf; color: #a0a0a0; }
```
